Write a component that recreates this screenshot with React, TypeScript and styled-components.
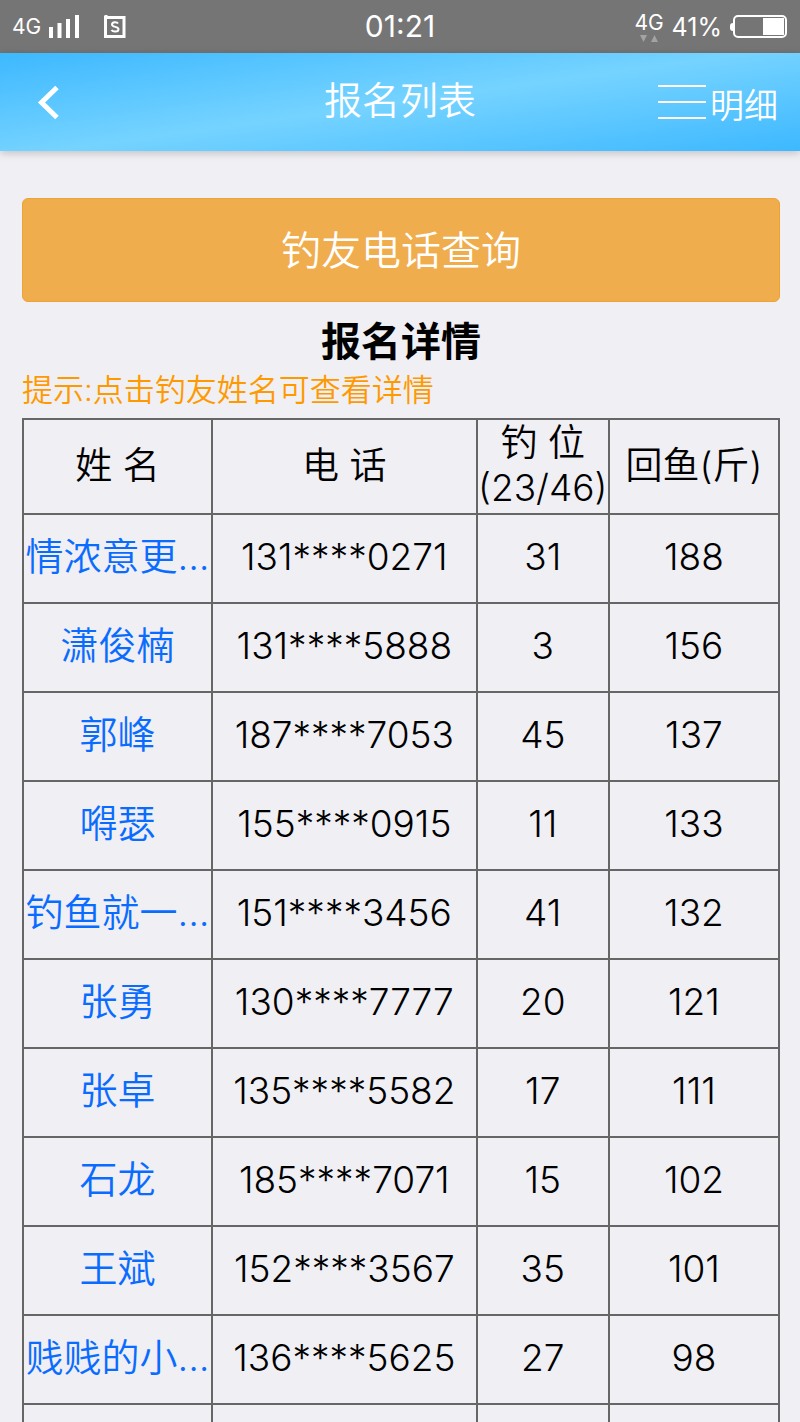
import React from 'react';
import styled, { createGlobalStyle } from 'styled-components';

const GlobalStyle = createGlobalStyle`
  * { box-sizing: border-box; }
  html { height: 100%; overflow: hidden; }
  body {
    height: 100%;
    margin: 0;
    overflow: hidden;
    background: #efeff4;
    color: #000;
    font-family: Inter, 'Noto Sans CJK SC', sans-serif;
    font-weight: 350;
  }
`;

const StatusBar = styled.div`
  display: grid;
  grid-template-columns: 1fr auto 1fr;
  align-items: center;
  height: 53px;
  padding: 0 12px;
  background: #757575;
  color: #fff;
  font-weight: 400;
`;

const StatusGroup = styled.div<{ $end?: boolean }>`
  display: flex;
  align-items: center;
  justify-content: ${(p) => (p.$end ? 'flex-end' : 'flex-start')};
  gap: 8px;
`;

const Clock = styled.time`
  font-size: 30px;
  line-height: 53px;
`;

const NetworkLabel = styled.span`
  font-size: 21px;
  line-height: 24px;
`;

const DataLink = styled.span`
  display: flex;
  flex-direction: column;
  align-items: center;
`;

const BatteryLevel = styled.span`
  font-size: 25px;
`;

const SignalIcon = styled.svg`
  margin-right: 16px;
`;

const TitleBar = styled.header`
  position: relative;
  display: grid;
  grid-template-columns: 1fr auto 1fr;
  align-items: center;
  height: 98px;
  padding: 0 22px;
  background: linear-gradient(172deg, #3db8ff 0%, #75d3ff 50%, #3db8ff 100%);
  box-shadow: 0 2px 8px rgba(0, 0, 0, 0.2);
  color: #fff;
`;

const PageTitle = styled.h1`
  margin: 0;
  padding-bottom: 4px;
  font-size: 38px;
  font-weight: inherit;
  line-height: 56px;
`;

const BarButton = styled.button<{ $end?: boolean }>`
  display: flex;
  align-items: center;
  justify-self: ${(p) => (p.$end ? 'end' : 'start')};
  gap: 4px;
  padding: 0;
  border: 0;
  background: none;
  color: inherit;
  font: inherit;
  font-size: 34px;
  line-height: 48px;
`;

const BarLabel = styled.span`
  padding-top: 8px;
`;

const Content = styled.main`
  padding: 47px 20px 0 22px;
`;

const SearchButton = styled.button`
  display: block;
  width: 100%;
  height: 104px;
  padding: 0 0 4px;
  border: 1px solid #eea236;
  border-radius: 6px;
  background: #f0ad4e;
  color: #fff;
  font: inherit;
  font-size: 40px;
`;

const SectionTitle = styled.h2`
  margin: 12px 0 0;
  font-size: 40px;
  font-weight: 700;
  line-height: 56px;
  text-align: center;
`;

const Hint = styled.p`
  margin: 0;
  padding-bottom: 8px;
  color: #ff9900;
  font-size: 31px;
  line-height: 40px;
`;

const Table = styled.table`
  width: 100%;
  table-layout: fixed;
  border-collapse: collapse;
  font-size: 37px;
  line-height: 48px;
  text-align: center;
  white-space: nowrap;
`;

const Col = styled.col<{ $share: number }>`
  width: ${(p) => p.$share}%;
`;

const HeadCell = styled.th`
  height: 95px;
  padding: 0 0 3px;
  border: 2px solid #666;
  font-weight: inherit;
  line-height: 45px;
`;

const Cell = styled.td`
  height: 89px;
  padding: 0 0 4px;
  border: 2px solid #666;
`;

const NameLink = styled.a`
  color: #0a6cff;
  font-size: 38px;
  text-decoration: none;
`;

const rows = [
  ['情浓意更...', '131****0271', '31', '188'],
  ['潇俊楠', '131****5888', '3', '156'],
  ['郭峰', '187****7053', '45', '137'],
  ['嘚瑟', '155****0915', '11', '133'],
  ['钓鱼就一...', '151****3456', '41', '132'],
  ['张勇', '130****7777', '20', '121'],
  ['张卓', '135****5582', '17', '111'],
  ['石龙', '185****7071', '15', '102'],
  ['王斌', '152****3567', '35', '101'],
  ['贱贱的小...', '136****5625', '27', '98'],
  ['', '', '', ''],
];

export default function App() {
  return (
    <>
      <GlobalStyle />
      <StatusBar>
        <StatusGroup>
          <NetworkLabel>4G</NetworkLabel>
          <SignalIcon width="31" height="24" viewBox="0 0 31 24" fill="#fff" aria-hidden="true">
            <path d="M0 12h4v11H0zM8.500 8h4v15h-4zM17 4h4v19h-4zM26 0h4v23h-4z" />
          </SignalIcon>
          <svg width="23" height="25" viewBox="0 0 23 25" fill="none" stroke="#fff" aria-hidden="true">
            <path d="M1.500 3.500v19h18.500v-19H0M2 1v3" strokeWidth="3" />
            <path d="M14 9.500c-1-1.800-6-2-6 1 0 3.200 6.500 1.500 6.500 4.700 0 3-5.600 3-7 .8" strokeWidth="2" />
          </svg>
        </StatusGroup>
        <Clock>01:21</Clock>
        <StatusGroup $end>
          <DataLink>
            <NetworkLabel>4G</NetworkLabel>
            <svg width="18" height="7" viewBox="0 0 18 7" fill="#a3a3a3" aria-hidden="true">
              <path d="M0 0h7L3.500 7zM11 7h7L14.500 0z" />
            </svg>
          </DataLink>
          <BatteryLevel>41%</BatteryLevel>
          <svg width="58" height="24" viewBox="0 0 58 24" aria-hidden="true">
            <path d="M3 8a3 3 0 0 0-3 3v2a3 3 0 0 0 3 3z" fill="#fff" />
            <rect x="4" y="1" width="52" height="21" rx="4" fill="none" stroke="#fff" strokeWidth="2" />
            <rect x="33" y="3" width="21" height="17" fill="#fff" />
          </svg>
        </StatusGroup>
      </StatusBar>
      <TitleBar>
        <BarButton aria-label="返回">
          <svg width="44" height="36" viewBox="0 0 44 36" fill="none" stroke="#fff" strokeWidth="5" aria-hidden="true">
            <path d="M35 3.500L19.500 18.500l15.500 15" />
          </svg>
        </BarButton>
        <PageTitle>报名列表</PageTitle>
        <BarButton $end>
          <svg width="48" height="36" viewBox="0 0 48 36" fill="none" stroke="#fff" strokeWidth="2" aria-hidden="true">
            <path d="M0 2h48M0 18h48M0 34h48" />
          </svg>
          <BarLabel>明细</BarLabel>
        </BarButton>
      </TitleBar>
      <Content>
        <SearchButton>钓友电话查询</SearchButton>
        <SectionTitle>报名详情</SectionTitle>
        <Hint>提示:点击钓友姓名可查看详情</Hint>
        <Table>
          <colgroup>
            <Col $share={25} />
            <Col $share={35} />
            <Col $share={17.5} />
            <Col $share={22.5} />
          </colgroup>
          <thead>
            <tr>
              <HeadCell scope="col">姓 名</HeadCell>
              <HeadCell scope="col">电 话</HeadCell>
              <HeadCell scope="col">
                钓 位<br />(23/46)
              </HeadCell>
              <HeadCell scope="col">回鱼(斤)</HeadCell>
            </tr>
          </thead>
          <tbody>
            {rows.map(([name, phone, spot, weight], i) => (
              <tr key={i}>
                <Cell>{name && <NameLink href="#">{name}</NameLink>}</Cell>
                <Cell>{phone}</Cell>
                <Cell>{spot}</Cell>
                <Cell>{weight}</Cell>
              </tr>
            ))}
          </tbody>
        </Table>
      </Content>
    </>
  );
}
